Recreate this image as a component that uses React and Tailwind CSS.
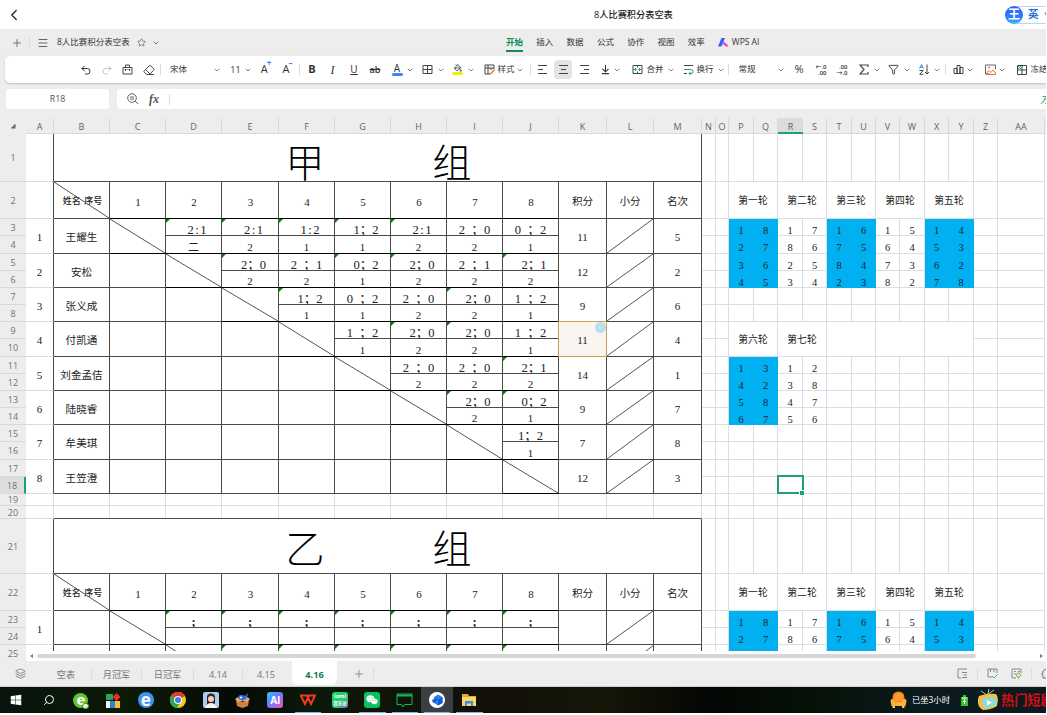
import React from "react";
import {
  ChevronLeft, ChevronDown, Plus, Menu, Star, Undo2, Redo2, Eraser, Grid2x2, PaintBucket, Layers, Search,
  Funnel, ArrowDownToLine,
} from "lucide-react";
import { FaWindows, FaWeixin } from "react-icons/fa";

const SERIF = "font-['Liberation_Serif','Noto_Sans_CJK_SC',serif]";
const UI = "font-['Open_Sans','Noto_Sans_CJK_SC',sans-serif]";

const COLS = ["A","B","C","D","E","F","G","H","I","J","K","L","M","N","O","P","Q","R","S","T","U","V","W","X","Y","Z","AA"];
const ROWS = Array.from({ length: 25 }, (_, i) => i + 1);
const GRID_COLS =
  "grid-cols-[28px_56px_56px_56px_57px_56px_56px_56px_56px_56px_48px_47px_48px_14px_13px_25px_24px_25px_24px_25px_24px_24px_25px_24px_25px_24px_47px]";
const GRID_ROWS =
  "grid-rows-[48px_37px_17px_18px_17px_17px_17px_17px_17px_18px_17px_17px_17px_17px_17px_18px_17px_17px_12px_13px_55px_37px_17px_17px_17px]";
const SCORE_COLS = ["C", "D", "E", "F", "G", "H", "I", "J"];

const PLAYERS = [
  { name: "王耀生", pts: 11, rank: 5, games: [["2:1", "二", 1], ["2:1", "2", 1], ["1:2", "1", 1], ["1；2", "1", 1], ["2:1", "2", 1], ["2 ；0", "2", 0], ["0 ；2", "1", 0]] },
  { name: "安松", pts: 12, rank: 2, games: [["2；0", "2", 1], ["2 ；1", "2", 0], ["0；2", "1", 1], ["2；0", "2", 1], ["2 ；1", "2", 0], ["2；1", "2", 1]] },
  { name: "张义成", pts: 9, rank: 6, games: [["1；2", "1", 1], ["0 ；2", "1", 0], ["2 ；0", "2", 0], ["2；0", "2", 1], ["1 ；2", "1", 0]] },
  { name: "付凯通", pts: 11, rank: 4, games: [["1 ；2", "1", 0], ["2；0", "2", 1], ["2；0", "2", 1], ["1 ；2", "1", 0]] },
  { name: "刘金孟佶", pts: 14, rank: 1, games: [["2 ；0", "2", 0], ["2 ；0", "2", 0], ["2；1", "2", 1]] },
  { name: "陆晓睿", pts: 9, rank: 7, games: [["2；0", "2", 1], ["0；2", "1", 1]] },
  { name: "牟美琪", pts: 7, rank: 8, games: [["1；2", "1", 0]] },
  { name: "王笠澄", pts: 12, rank: 3, games: [] },
];
const EMPTY_ROW = (n) => Array.from({ length: n }, () => [";", "", 1]);

const ROUNDS = [
  ["第一轮", ["18", "27", "36", "45"]],
  ["第二轮", ["17", "86", "25", "34"]],
  ["第三轮", ["16", "75", "84", "23"]],
  ["第四轮", ["15", "64", "73", "82"]],
  ["第五轮", ["14", "53", "62", "78"]],
];
const ROUNDS2 = [
  ["第六轮", ["13", "42", "58", "67"]],
  ["第七轮", ["12", "38", "47", "56"]],
  ["", []], ["", []], ["", []],
];

function Cell({ c, r, cs = 1, rs = 1, className = "", children }) {
  return (
    <div
      className={`relative flex items-center justify-center overflow-hidden border-r border-b whitespace-pre ${className}`}
      style={{ gridColumn: `${COLS.indexOf(c) + 1} / span ${cs}`, gridRow: `${r} / span ${rs}` }}
    >
      {children}
    </div>
  );
}

function Slash({ up }) {
  return (
    <svg className="absolute inset-0 h-full w-full" viewBox="0 0 100 100" preserveAspectRatio="none">
      <line x1="0" y1={up ? 100 : 0} x2="100" y2={up ? 0 : 100} stroke="#555" strokeWidth="1" vectorEffect="non-scaling-stroke" />
    </svg>
  );
}

const Flag = () => <span className="absolute left-0 top-0 h-[4px] w-[4px] bg-[#0a7d0a] [clip-path:polygon(0_0,100%_0,0_100%)]" />;

function Score({ text, lead }) {
  return (
    <span className={`flex text-[12.6px] leading-none text-[#222] ${lead ? "pl-[7px]" : ""}`}>
      {[...text].map((ch, i) => (
        <span key={i} className={ch === "；" ? "w-[12.6px]" : ch === ";" ? "w-[6.3px] text-center font-bold" : "w-[6.3px] text-center"}>{ch}</span>
      ))}
    </span>
  );
}

const LINE = "border-[#4a4a4a] bg-white";

function PlayerRows({ index, player, row, games }) {
  return (
    <>
      <Cell c="A" r={row} rs={2} className="border-r-[#4a4a4a] border-b-[#d9dbe0] bg-white pt-[3px] text-[11px]">{index + 1}</Cell>
      <Cell c="B" r={row} rs={2} className={`${LINE} pt-[4px] text-[10.6px]`}>{player ? player.name : ""}</Cell>
      {SCORE_COLS.map((col, j) => {
        if (j <= index) {
          return (
            <Cell key={col} c={col} r={row} rs={2} className={j === index ? "border-r-[#4a4a4a] border-b-black bg-white" : LINE}>
              {j === index && <Slash />}
            </Cell>
          );
        }
        const [score, pts, flag] = games[j - index - 1];
        return (
          <React.Fragment key={col}>
            <Cell c={col} r={row} className={`${LINE} pt-[7px]`}>
              {flag ? <Flag /> : null}
              <Score text={score} lead={flag && score.length > 1} />
            </Cell>
            <Cell c={col} r={row + 1} className="border-r-[#4a4a4a] border-b-black bg-white pt-[5px] text-[11px] leading-none">{pts}</Cell>
          </React.Fragment>
        );
      })}
      <Cell c="K" r={row} rs={2} className={`${LINE} pt-[3px] text-[11px]`}>{player ? player.pts : ""}</Cell>
      <Cell c="L" r={row} rs={2} className={LINE}><Slash up /></Cell>
      <Cell c="M" r={row} rs={2} className={`${LINE} pt-[3px] text-[11px]`}>{player ? player.rank : ""}</Cell>
    </>
  );
}

function GroupHeader({ row, title }) {
  return (
    <>
      <Cell c="A" r={row} className="border-r-[#4a4a4a] border-b-[#d9dbe0] bg-white" />
      <Cell c="A" r={row + 1} className="border-r-[#4a4a4a] border-b-[#d9dbe0] bg-white" />
      <Cell c="B" r={row} cs={12} className={`${LINE} gap-[108px] text-[39px] font-light leading-none text-black ${row === 1 ? "pl-[2px] pt-[11px]" : "pl-[2px] pt-[7px]"}`}>
        <span>{title}</span><span>组</span>
      </Cell>
      <Cell c="B" r={row + 1} className={`${LINE} pl-[2px] pt-[3px] text-[9px] font-medium`}><Slash />姓名 <span className="pl-px">序号</span></Cell>
      {SCORE_COLS.map((col, j) => (
        <Cell key={col} c={col} r={row + 1} className="border-r-[#4a4a4a] border-b-black bg-white pt-[4px] pl-px text-[11px]">{j + 1}</Cell>
      ))}
      {["积分", "小分", "名次"].map((t, j) => (
        <Cell key={t} c={COLS[10 + j]} r={row + 1} className={`${LINE} pt-[4px] text-[10.6px]`}>{t}</Cell>
      ))}
    </>
  );
}

function Rounds({ row, rounds, span = 1, limit = 4 }) {
  return rounds.map(([title, pairs], k) => {
    const blue = k % 2 === 0;
    const left = COLS[15 + k * 2];
    const right = COLS[16 + k * 2];
    const tone = blue ? "border-[#00b0f0] bg-[#00b0f0]" : "border-[#dcdde1] bg-white";
    return (
      <React.Fragment key={k}>
        <Cell c={left} r={row} cs={2} rs={span} className="border-[#dcdde1] bg-white pt-[3px] text-[9.8px]">{title}</Cell>
        {pairs.slice(0, limit).map((p, i) => (
          <React.Fragment key={i}>
            <Cell c={left} r={row + span + i} className={`${tone} pt-[8px] text-[10.5px] leading-none`}>{p[0]}</Cell>
            <Cell c={right} r={row + span + i} className={`${tone} pt-[8px] text-[10.5px] leading-none`}>{p[1]}</Cell>
          </React.Fragment>
        ))}
      </React.Fragment>
    );
  });
}

function Sheet() {
  return (
    <div className={`grid h-[517px] w-[1020px] content-start overflow-hidden rounded-tl-[3px] bg-white text-[#222] ${SERIF} ${GRID_COLS} ${GRID_ROWS}`}>
      {ROWS.map((r) => COLS.map((c) => <Cell key={c + r} c={c} r={r} className="border-[#dcdde1]" />))}
      <GroupHeader row={1} title="甲" />
      {PLAYERS.map((p, i) => <PlayerRows key={p.name} index={i} player={p} row={3 + i * 2} games={p.games} />)}
      <Cell c="B" r={20} cs={12} className="border-r-transparent border-b-[#4a4a4a]" />
      <GroupHeader row={21} title="乙" />
      <PlayerRows index={0} row={23} games={EMPTY_ROW(7)} />
      {COLS.slice(0, 13).map((c, j) => (
        <Cell key={c} c={c} r={25} className={LINE}>
          {j >= 4 && j <= 9 && <Flag />}
          {c === "D" && <svg className="absolute left-0 top-0 h-[35px] w-[56px]"><path d="M0 0 56 35" stroke="#555" /></svg>}
          {c === "L" && <svg className="absolute left-0 top-0 h-[35px] w-[47px]"><path d="M0 35 47 0" stroke="#555" /></svg>}
        </Cell>
      ))}
      <Rounds row={2} rounds={ROUNDS} />
      <Rounds row={9} rounds={ROUNDS2} span={2} />
      <Rounds row={22} rounds={ROUNDS} limit={3} />
      <div className="relative col-start-11 row-span-2 row-start-9 -ml-px -mt-px flex items-center justify-center border border-[#c5a052] bg-[#f9f5f0] pt-[3px] text-[11px]">
        11<span className="absolute right-0 top-0 flex h-[11px] w-[11px] items-center justify-center rounded-full bg-[#b9e0f1] text-[5px] text-white">···</span>
      </div>
      <div className="relative col-start-18 row-start-18 -ml-px -mr-px -mt-[2px] border-2 border-[#21a070]">
        <span className="absolute -bottom-[3px] -right-[2px] h-[4px] w-[4px] bg-[#21a070] outline outline-1 outline-white" />
      </div>
    </div>
  );
}

const Slot = ({ className, children }) => <div className={`flex shrink-0 items-center justify-center whitespace-nowrap ${className}`}>{children}</div>;
const Chev = ({ className = "" }) => <ChevronDown className={`h-[8px] w-[8px] shrink-0 text-[#666] ${className}`} strokeWidth={2.5} />;
const Sep = ({ className = "" }) => <div className={`h-[11px] w-px shrink-0 bg-[#dcdcdc] ${className}`} />;

function Lines({ rows }) {
  return (
    <svg width="11" height="11" viewBox="0 0 11 11" stroke="#444" fill="none">
      {rows.map(([a, b], i) => <line key={i} x1={a} x2={b} y1={1.5 + i * 4} y2={1.5 + i * 4} />)}
    </svg>
  );
}

function Decimal({ add }) {
  return (
    <div className="flex flex-col text-[6px] font-semibold leading-[6px]">
      {add ? <><span>←.0</span><span className="text-right">.00</span></> : <><span className="text-right">.00</span><span>→.0</span></>}
    </div>
  );
}

function Toolbar() {
  return (
    <div className={`ml-[5px] flex h-[27px] w-[1041px] shrink-0 items-center overflow-hidden rounded-l-[5px] bg-white pl-[70px] text-[8.5px] text-[#333] shadow-[0_1px_2px_rgba(0,0,0,0.2)] ${UI}`}>
      <Slot className="w-[21px]"><Undo2 size={12} strokeWidth={2} /></Slot>
      <Slot className="w-[21px] text-[#c4c4c4]"><Redo2 size={12} strokeWidth={2} /></Slot>
      <Slot className="w-[21px]">
        <svg width="11" height="11" viewBox="0 0 11 11" fill="none" stroke="#444"><path d="M1 3.5H10V10H1ZM3.5 3.5V1H7.5V3.5" /><path d="M1.5 5.5H9.5" stroke="#f0a070" /><path d="M3.5 5v2M7.5 5v2" /></svg>
      </Slot>
      <Slot className="w-[22px]"><Eraser size={12} strokeWidth={1.8} /></Slot>
      <Sep />
      <Slot className="ml-[1px] w-[33px]">宋体</Slot>
      <Chev className="ml-[18px]" />
      <Slot className="ml-[6px] w-[17px] text-[9px]">11</Slot>
      <Chev />
      <Slot className="w-[28px] text-[11px]">A<sup className="-ml-px -mt-[5px] text-[8px] font-bold text-[#3b82f6]">+</sup></Slot>
      <Slot className="w-[15px] text-[11px]">A<sup className="-ml-px -mt-[6px] text-[8px] font-bold text-[#3b82f6]">–</sup></Slot>
      <Sep className="ml-[4px]" />
      <Slot className="w-[24px] text-[11px] font-bold">B</Slot>
      <Slot className="w-[17px] font-['Liberation_Serif'] text-[12px] italic">I</Slot>
      <Slot className="w-[26px] text-[10px] underline">U</Slot>
      <Slot className="w-[16px] text-[9px] font-semibold line-through">ab</Slot>
      <Slot className="ml-[5px] w-[18px]">
        <span className="flex flex-col items-center text-[10px] leading-[8px]">A<i className="mt-px block h-[3px] w-[11px] rounded-sm bg-[#4285f4]" /></span>
      </Slot>
      <Chev />
      <Slot className="ml-[3px] w-[20px]">
        <svg width="11" height="11" viewBox="0 0 11 11" fill="none" stroke="#444"><path d="M1 1.500H10V9.500H1ZM1 5.500H10M5.500 1.500V9.500" /></svg>
      </Slot>
      <Chev />
      <Slot className="ml-[3px] w-[19px]">
        <span className="flex flex-col items-center"><PaintBucket size={8} strokeWidth={2.4} /><i className="block h-[3px] w-[11px] rounded-sm bg-[#f5f000]" /></span>
      </Slot>
      <Chev />
      <Slot className="ml-[6px] w-[16px]">
        <svg width="11" height="11" viewBox="0 0 11 11" fill="none" stroke="#444"><path d="M6 10H1V1H10V5M1 4H10M4 1V10M7 4v2" /><path d="M10.500 5.500 7 9.500 5.500 10" stroke="#e8703a" strokeWidth="1.4" /></svg>
      </Slot>
      <Slot className="w-[18px]">样式</Slot>
      <Chev className="ml-[1px]" />
      <Sep className="ml-[6px]" />
      <Slot className="w-[22px]"><Lines rows={[[1, 10], [1, 6], [1, 10]]} /></Slot>
      <Slot className="ml-[1px] h-[19px] w-[18px] rounded-[4px] bg-[#e3e3e3]"><Lines rows={[[1, 10], [3, 8], [1, 10]]} /></Slot>
      <Slot className="ml-[1px] w-[22px]"><Lines rows={[[1, 10], [5, 10], [1, 10]]} /></Slot>
      <Slot className="ml-[2px] w-[16px]"><ArrowDownToLine size={11} strokeWidth={2.2} /></Slot>
      <Chev />
      <Slot className="ml-[8px] w-[16px]">
        <svg width="11" height="11" viewBox="0 0 11 11" fill="none" stroke="#444"><path d="M1 1.500H10V9.500H1ZM5.500 1.500V3.500M5.500 7.500V9.500" /><path d="M1 5.500H4M10 5.500H7M3 4 4.500 5.500 3 7M8 4 6.500 5.500 8 7" stroke="#21a070" /></svg>
      </Slot>
      <Slot className="ml-[1px] w-[18px]">合并</Slot>
      <Chev className="ml-[3px]" />
      <Slot className="ml-[6px] w-[15px]">
        <svg width="11" height="11" viewBox="0 0 11 11" fill="none" stroke="#444"><path d="M1 1.500H10M1 9.500H4" /><path d="M1 5.500H8.500Q10 5.500 10 7.500T8 9.500H6M7.500 8 6 9.500 7.500 11" stroke="#21a070" /></svg>
      </Slot>
      <Slot className="w-[18px]">换行</Slot>
      <Chev className="ml-[3px]" />
      <Sep className="ml-[3px]" />
      <Slot className="ml-[9px] w-[18px]">常规</Slot>
      <Chev className="ml-[21px]" />
      <Slot className="ml-[6px] w-[16px] text-[11px]">%</Slot>
      <Slot className="ml-[6px] w-[16px]"><Decimal add /></Slot>
      <Slot className="ml-[5px] w-[16px]"><Decimal /></Slot>
      <Slot className="ml-[6px] w-[15px]"><svg width="10" height="11" viewBox="0 0 10 11" fill="none" stroke="#444" strokeWidth="1.200"><path d="M9 3V1H1L5 5.500 1 10H9V8" /></svg></Slot>
      <Chev className="ml-[2px]" />
      <Slot className="ml-[5px] w-[14px]"><Funnel size={11} strokeWidth={2} /></Slot>
      <Chev className="ml-[3px]" />
      <Slot className="ml-[6px] w-[15px]">
        <svg width="11" height="11" viewBox="0 0 11 11" fill="none" stroke="#444"><path d="M.5 4.500 2.500 .5 4.500 4.500M1.200 3.300H3.800" stroke="#3b82f6" /><path d="M.5 6.500H4.200L.7 10.300H4.500M8 .5V10M6 8 8 10 10 8" /></svg>
      </Slot>
      <Chev className="ml-[1px]" />
      <Sep className="ml-[4px]" />
      <Slot className="ml-[4px] w-[16px]">
        <svg width="11" height="11" viewBox="0 0 11 11" fill="none" stroke="#444"><path d="M1 4.500H4V9.500H1ZM4 1.500H7V9.500H4ZM7 3.500H10V9.500H7Z" /></svg>
      </Slot>
      <Chev />
      <Slot className="ml-[8px] w-[16px]">
        <svg width="11" height="11" viewBox="0 0 11 11" fill="none" stroke="#e8703a"><path d="M10.500 5V1H.5V10H5" stroke="#666" /><path d="M1 10 4 6.500 6 8.500 8 6 10.500 9V10.500H1" /><circle cx="4" cy="3.500" r=".7" /></svg>
      </Slot>
      <Chev />
      <Slot className="ml-[8px] w-[16px]">
        <svg width="10" height="10" viewBox="0 0 10 10" fill="none" stroke="#444"><path d="M.5 .5H9.500V9.500H.5ZM.5 5H9.500M5 .5V9.500" /><path d="M1 1 5 5M1 4 4 1" stroke="#21a070" /></svg>
      </Slot>
      <Slot className="w-[18px]">冻结</Slot>
    </div>
  );
}

const MENU = ["开始", "插入", "数据", "公式", "协作", "视图", "效率"];
const SHEETS = [["空表", "w-[50px]"], ["月冠军", "w-[49px]"], ["日冠军", "w-[51px]"], ["4.14", "w-[48px]"], ["4.15", "w-[46px]"]];

function TaskIcon({ active, line, children }) {
  return (
    <div className={`relative flex w-[32.4px] shrink-0 items-center justify-center ${active ? "bg-[#3c3f41]" : ""}`}>
      {children}
      {line && <span className="absolute bottom-0 left-[3px] right-[3px] h-[1.5px] bg-[#76b9ed]" />}
    </div>
  );
}

function Taskbar() {
  return (
    <div className={`flex h-[26px] shrink-0 overflow-hidden bg-[linear-gradient(90deg,#07130c,#0c1a08_12%,#050a05_22%,#0b1909_30%,#120f08_45%,#151608_58%,#030603_68%,#061208_78%,#0a1a1e_88%,#0a1a1e)] text-white ${UI}`}>
      <TaskIcon><FaWindows size={12} /></TaskIcon>
      <TaskIcon><Search className="-scale-x-100" size={12} strokeWidth={2} /></TaskIcon>
      <TaskIcon>
        <span className="relative flex h-[15px] w-[15px] items-center justify-center rounded-full bg-[#63c531] pb-[2px] text-[15px] font-bold leading-none">e<i className="absolute -bottom-px -right-px h-[6px] w-[7px] rounded-sm border border-[#3a9a10] bg-[#e8f5df]" /></span>
      </TaskIcon>
      <TaskIcon>
        <svg width="15" height="15" viewBox="0 0 15 15"><path d="M0 1H7V7H0Z" fill="#29a35a" /><path d="M0 8H4V15H0Z" fill="#f3f3f3" /><path d="M4 8H9V15H4Z" fill="#2d7fe0" /><path d="M9 8H14V15H9Z" fill="#f5c12e" /><path d="M10.500 0 14.500 4 10.500 8 6.500 4Z" fill="#ef2b2b" /></svg>
      </TaskIcon>
      <TaskIcon><span className="flex h-[16px] w-[16px] items-center justify-center rounded-full bg-[#3d93ee] pb-[2px] text-[17px] font-bold leading-none">e</span></TaskIcon>
      <TaskIcon>
        <svg width="16" height="16" viewBox="0 0 16 16"><circle cx="8" cy="8" r="8" fill="#f6c927" /><path d="M8 8 1 4A8 8 0 0 1 15 4Z" fill="#e33b2e" /><path d="M8 8 1 4A8 8 0 0 0 7 16L10 10Z" fill="#2da94f" /><circle cx="8" cy="8" r="4" fill="#fff" /><circle cx="8" cy="8" r="3" fill="#3b82e8" /></svg>
      </TaskIcon>
      <TaskIcon>
        <svg width="16" height="16" viewBox="0 0 16 16"><rect width="16" height="16" rx="2" fill="#a9cdee" /><path d="M4 13V5Q4 1.500 8 1.500T12 5V11L11 13Z" fill="#3a2420" /><circle cx="8" cy="7" r="3" fill="#f5cfc0" /><path d="M2 16Q4 11 8 11T14 16Z" fill="#f3f4f8" /></svg>
      </TaskIcon>
      <TaskIcon>
        <svg width="15" height="15" viewBox="0 0 15 15"><path d="M1 7 7.500 9 14 7 13 13 7.500 15 2 13Z" fill="#c78542" /><path d="M0 6 3 4 7.500 7.500 12 4 15 6 12 9 7.500 8 3 9Z" fill="#e5ac66" /><path d="M3 5Q3 2 6 2T10 3L13 0 12 5Q10 7.500 7 7T3 5Z" fill="#3867f0" /><circle cx="6" cy="4.500" r="1" fill="#fff" /></svg>
      </TaskIcon>
      <TaskIcon><span className="flex h-[16px] w-[16px] items-center justify-center rounded-[3px] bg-[linear-gradient(135deg,#22d3ee,#6080ff_40%,#f050c0)] text-[10px] font-bold">AI</span></TaskIcon>
      <TaskIcon line>
        <svg width="16" height="12" viewBox="0 0 16 12" fill="none" stroke="#ee3a22" strokeWidth="2"><path d="M0 1.500H7L11 10 15 1.500H9L5 10 1 2" /></svg>
      </TaskIcon>
      <TaskIcon><span className="flex h-[16px] w-[16px] flex-col items-center justify-center rounded-[3px] bg-[linear-gradient(135deg,#14d85c,#28c878_60%,#8a60d0)] text-[5.5px] font-bold leading-[7px]"><i className="not-italic">iomi</i><i className="text-[4.5px] not-italic">音乐论</i></span></TaskIcon>
      <TaskIcon line><span className="flex h-[16px] w-[16px] items-center justify-center rounded-[3px] bg-[#07c160]"><FaWeixin size={12} /></span></TaskIcon>
      <TaskIcon line>
        <svg width="17" height="15" viewBox="0 0 17 15" fill="none" stroke="#10b860"><path d="M1 1H16V11.500H8.500L7 14 5.500 11.500H1Z" /><path d="M1 2.500H16" strokeWidth="2" /></svg>
      </TaskIcon>
      <TaskIcon active line>
        <svg width="16" height="16" viewBox="0 0 16 16"><circle cx="8" cy="8" r="8" fill="#fff" /><path d="M9 2.500 13.500 5V11L9 13.500 5 11V5Z" fill="#2388f5" /><path d="M9 7.500 13.500 5V11L9 13.500Z" fill="#1557d0" /><path d="M3 8 8 6V9L4 11Z" fill="#1557d0" /></svg>
      </TaskIcon>
      <TaskIcon line>
        <svg width="15" height="13" viewBox="0 0 15 13"><path d="M0 0H6L7 2H14V12H0Z" fill="#e8a92e" /><path d="M0 3H14V12H0Z" fill="#fbd568" /><path d="M3 12V7H11V12H9V9.500H5V12Z" fill="#3a8ee0" /></svg>
      </TaskIcon>
      <div className="ml-auto flex items-center">
        <svg width="17" height="18" viewBox="0 0 17 18"><path d="M2.500 12V7Q2.500 .5 8.500 .5T14.500 7V12Z" fill="#ff7d12" /><path d="M4 10V6Q5 2 8.500 2T13 6V10Z" fill="#ff9a35" /><path d="M.5 10Q.5 8 2.300 8T4.500 11H12.500Q12.500 8 14.700 8T16.500 10L15.500 15H1.500Z" fill="#fbb040" /><path d="M2.500 15H5V17H2.500ZM12 15H14.500V17H12Z" fill="#f3d24a" /></svg>
        <span className="ml-[5px] w-[40px] whitespace-nowrap text-[8.3px]">已坐3小时</span>
        <svg className="ml-[9px]" width="7" height="11" viewBox="0 0 7 11"><path d="M2 0H5V2H7V11H0V2H2Z" fill="#35c42d" /><path d="M1 3H6M3.500 4V9M2 6.500H5" stroke="#fff" /></svg>
        <svg className="ml-[9px]" width="22" height="22" viewBox="0 0 22 22"><path d="M4 2 10 6 17 1M11 5 12 0" stroke="#c9c2a0" fill="none" /><path d="M2 7Q10 4 19 5Q22 8 20 17Q14 21 6 21Q0 18 1 10Z" fill="#f0c04c" /><path d="M5 10Q12 7 19 9Q20 13 18 17Q12 19 7 19Q5 14 5 10Z" fill="#8fdcd0" /><path d="M10 11 15 13.500 10 16.500Z" fill="#fff" /></svg>
        <span className="ml-[2px] w-[45px] overflow-hidden whitespace-nowrap text-[13.200px] font-bold leading-[24px] text-[#d40f12]">热门短剧</span>
      </div>
    </div>
  );
}

export default function App() {
  return (
    <div className={`flex h-[713px] w-[1046px] flex-col overflow-hidden bg-[#ededed] ${UI}`}>
      <header className="flex h-[29px] shrink-0 items-center bg-white text-[#222]">
        <ChevronLeft className="ml-[5px]" size={18} strokeWidth={1.7} />
        <span className="ml-[571px] whitespace-nowrap text-[9.2px] font-medium leading-none">8人比赛积分表空表</span>
        <div className="ml-auto flex items-center">
          <span className="relative z-10 flex h-[18px] w-[18px] items-center justify-center rounded-full bg-[linear-gradient(180deg,#2b62f5,#2f80ff_70%,#36c8f5)] text-[12px] font-bold text-white">王</span>
          <span className="-ml-[6px] flex h-[18px] w-[29px] items-center overflow-hidden border-y border-[#b9d3fa] pl-[11px] text-[10.500px] font-bold whitespace-nowrap text-[#2871d8]">英<i className="ml-[6px] text-[8px] not-italic">°</i></span>
        </div>
      </header>

      <nav className="flex h-[27px] shrink-0 items-center text-[8.500px] text-[#333]">
        <Plus className="ml-[11px] text-[#666]" size={12} strokeWidth={1.8} />
        <Sep className="ml-[6px]" />
        <Menu className="ml-[7px] text-[#555]" size={12} strokeWidth={1.8} />
        <span className="ml-[8px] w-[74px] whitespace-nowrap">8人比赛积分表空表</span>
        <Star className="ml-[6px] text-[#666]" size={9} strokeWidth={2} />
        <Chev className="ml-[6px]" />
        <div className="ml-[346px] flex gap-[13.300px]">
          {MENU.map((m, i) => (
            <span key={m} className={i === 0 ? "relative w-[17px] whitespace-nowrap font-bold text-[#0f8a5f]" : "w-[17px] whitespace-nowrap"}>
              {m}
              {i === 0 && <i className="absolute -bottom-[3px] left-0 h-[1.500px] w-full bg-[#0f8a5f]" />}
            </span>
          ))}
        </div>
        <svg className="ml-[13px]" width="11" height="9" viewBox="0 0 11 9"><path d="M3.500 0H7L3.500 8.500H0Z" fill="#3b5cff" /><path d="M5 4Q8 4 10.500 8.500H7.500Q6.500 6.500 4.500 6Z" fill="#f04fb0" /></svg>
        <span className="ml-[3px]">WPS AI</span>
      </nav>

      <Toolbar />

      <div className="mt-[6px] flex h-[20px] shrink-0 gap-[8px] pl-[6px] text-[#555]">
        <div className="flex w-[103px] items-center justify-center rounded-[3px] bg-white pt-[2px] text-[8.800px]">R18</div>
        <div className="flex flex-1 items-center overflow-hidden rounded-l-[3px] bg-white">
          <svg className="ml-[10px]" width="12" height="12" viewBox="0 0 12 12" fill="none" stroke="#666"><circle cx="5" cy="5" r="4.300" /><path d="M8 8 11 11M3 4H7M3 6H7" /></svg>
          <span className="ml-[10px] font-['Liberation_Serif'] text-[12px] font-bold italic leading-none">fx</span>
          <Sep className="ml-[10px]" />
          <span className="ml-auto w-[6px] overflow-hidden text-[10px] italic text-[#21a070]">方</span>
        </div>
      </div>

      <div className="mt-[9px] flex h-[16px] shrink-0 text-[9px] text-[#5b6470]">
        <div className="flex w-[26px] items-center justify-center"><span className="h-[5px] w-[5px] bg-[#666] [clip-path:polygon(100%_0,100%_100%,0_100%)]" /></div>
        <div className={`grid ${GRID_COLS}`}>
          {COLS.map((c) => (
            <div key={c} className={c === "R" ? "flex items-center justify-center border-b-2 border-[#21a070] bg-[#dcdcdc] pt-[2px] leading-none" : "flex items-center justify-center border-r border-b border-[#d6d9df] pt-px leading-none"}>{c}</div>
          ))}
        </div>
      </div>

      <div className="flex h-[527px] shrink-0">
        <div className={`grid h-[527px] w-[26px] shrink-0 overflow-hidden text-[9px] text-[#6b727c] ${GRID_ROWS}`}>
          {ROWS.map((r) => (
            <div key={r} className={r === 18 ? "flex items-center justify-center border-b border-r-2 border-b-[#d6d9df] border-r-[#21a070] bg-[#dedede] leading-none" : "flex items-center justify-center border-b border-[#d6d9df] leading-none"}>{r}</div>
          ))}
        </div>
        <div className="w-[1020px] bg-white">
          <Sheet />
          <div className="flex h-[10px] items-center">
            <span className="ml-[4px] h-[4px] w-[3px] bg-[#777] [clip-path:polygon(100%_0,100%_100%,0_50%)]" />
            <span className="ml-[4px] h-[4px] w-[939px] rounded-full bg-[#d6d6d6]" />
            <span className="ml-auto mr-[3px] h-[4px] w-[3px] bg-[#777] [clip-path:polygon(0_0,0_100%,100%_50%)]" />
          </div>
        </div>
      </div>

      <footer className="flex h-[26px] shrink-0 items-center border-b border-[#cfcfcf] text-[9.200px] text-[#777]">
        <Layers className="ml-[15px]" size={11} strokeWidth={1.8} />
        <div className="ml-[15px] flex items-center pt-[2px]">
          {SHEETS.map(([s, w], i) => (
            <React.Fragment key={s}>
              {i > 0 && <Sep className="bg-[#cfcfcf]" />}
              <span className={`shrink-0 text-center whitespace-nowrap ${w}`}>{s}</span>
            </React.Fragment>
          ))}
        </div>
        <span className="ml-[3px] flex h-[24px] w-[45px] items-center justify-center self-start rounded-b-[6px] bg-white pt-[3px] font-bold text-[#0f7a50]">4.16</span>
        <Plus className="ml-[16px] text-[#888]" size={12} strokeWidth={1.800} />
        <Sep className="ml-[8px] bg-[#999]" />
        <div className="ml-auto flex items-center">
          <svg width="11" height="11" viewBox="0 0 11 11" fill="none" stroke="#888"><path d="M10 1H1V10H4M5 4.500H10M6.500 7H10M5 9.500H10" /></svg>
          <Sep className="ml-[9px] bg-[#cfcfcf]" />
          <svg className="ml-[9px]" width="11" height="11" viewBox="0 0 11 11" fill="none" stroke="#888"><path d="M10 5V1H1V9H5M3.500 1V4M7 1V4M3 3H4" /><path d="M5 8 7 10 10.500 6.500" stroke="#4cae84" /></svg>
          <svg className="ml-[13px]" width="11" height="11" viewBox="0 0 11 11" fill="none" stroke="#888"><path d="M10 5V1H1V10H5M3 3.500H5M3 6H5M7 3.500H9" /><circle cx="7.500" cy="7" r="2" stroke="#6abb3c" /><path d="M7.500 9V11" stroke="#6abb3c" /></svg>
          <Sep className="ml-[9px] bg-[#cfcfcf]" />
          <svg className="ml-[9px]" width="5" height="11" viewBox="0 0 5 11" fill="none" stroke="#777"><path d="M5 1 2 3V5L.5 6 2 7V10H5" /></svg>
        </div>
      </footer>

      <Taskbar />
    </div>
  );
}
